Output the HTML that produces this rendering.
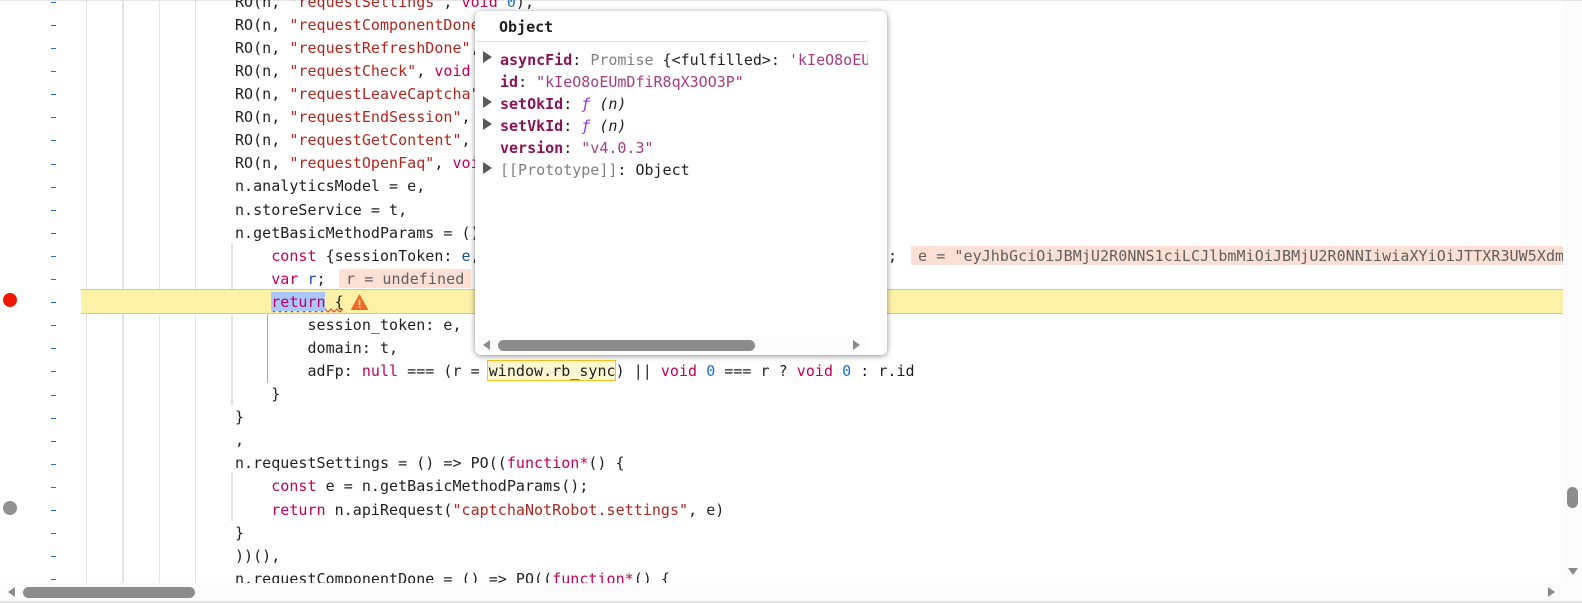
<!DOCTYPE html>
<html><head><meta charset="utf-8"><style>
html,body{margin:0;padding:0;width:1582px;height:603px;overflow:hidden;background:#fff}
body{position:relative;font-family:"DejaVu Sans Mono","Liberation Mono",monospace;font-size:15px;color:#1f1f1f}
.a{position:absolute}
.g{position:absolute;background:#e3e3e3;width:1px;top:1px;height:582px}
.d{position:absolute;left:51px;width:5px;height:1.4px;background:#1a6fd8}
#code{position:absolute;left:235px;top:-9.2px;white-space:pre;line-height:23.08px;letter-spacing:.03px}
.k{color:#c2005c}.s{color:#b3261e}.n{color:#1a6fd8}.v{color:#174ea6}
.dec{position:absolute;background:#fde0d5;color:#5f5f5f;white-space:pre;overflow:hidden;line-height:20px;letter-spacing:.07px}
#pop{position:absolute;left:475px;top:11px;width:412px;height:344px;background:#fff;border-radius:6px;box-shadow:0 1px 6px rgba(0,0,0,.45);overflow:hidden}
.r{position:absolute;left:25px;width:368px;white-space:pre;overflow:hidden;height:22px;line-height:22px}
.p{color:#881456;font-weight:bold}.st{color:#a83c82}.gr{color:#808080}.f{color:#9334e6;font-style:italic}.i{font-style:italic}
.t{position:absolute;left:8px;width:0;height:0;border-left:9px solid #5a5a5a;border-top:6px solid transparent;border-bottom:6px solid transparent}
</style></head><body>
<div class="a" style="left:0;top:0;width:1582px;height:1px;background:#e5e5e5"></div>
<div class="g" style="left:86px"></div>
<div class="g" style="left:122px;width:2px"></div>
<div class="g" style="left:159px"></div>
<div class="g" style="left:195px"></div>
<div class="g" style="left:231px;top:244px;height:162px;width:2px"></div>
<div class="g" style="left:231px;top:472px;height:49px;width:2px"></div>
<div class="a" style="left:81px;top:289px;width:1482px;height:25px;box-sizing:border-box;background:#fdf1a8;border-top:1px solid #f5c92f;border-bottom:1px solid #f5c92f"></div>
<div class="a" style="left:267px;top:314px;width:1px;height:69px;background:#8ab4f0"></div>
<svg class="a" style="left:271px;top:308px" width="72" height="5" viewBox="0 0 72 5"><path d="M0 1 l3 3 l3 -3 l3 3 l3 -3 l3 3 l3 -3 l3 3 l3 -3 l3 3 l3 -3 l3 3 l3 -3 l3 3 l3 -3 l3 3 l3 -3 l3 3 l3 -3 l3 3 l3 -3 l3 3 l3 -3 l3 3 l3 -3" fill="none" stroke="#e8352b" stroke-width="1"/></svg>
<div class="a" style="left:271px;top:292px;width:54px;height:19px;background:#a8c7fa"></div>
<div class="a" style="left:487px;top:360px;width:129px;height:21px;box-sizing:border-box;background:#fdf6d2;border:1px solid #f5c518"></div>

<div class="d" style="top:2px"></div><div class="d" style="top:25px"></div><div class="d" style="top:48px"></div><div class="d" style="top:71px"></div><div class="d" style="top:94px"></div><div class="d" style="top:117px"></div><div class="d" style="top:140px"></div><div class="d" style="top:164px"></div><div class="d" style="top:187px"></div><div class="d" style="top:210px"></div><div class="d" style="top:233px"></div><div class="d" style="top:256px"></div><div class="d" style="top:279px"></div><div class="d" style="top:302px"></div><div class="d" style="top:325px"></div><div class="d" style="top:348px"></div><div class="d" style="top:371px"></div><div class="d" style="top:395px"></div><div class="d" style="top:418px"></div><div class="d" style="top:441px"></div><div class="d" style="top:464px"></div><div class="d" style="top:487px"></div><div class="d" style="top:510px"></div><div class="d" style="top:533px"></div><div class="d" style="top:556px"></div><div class="d" style="top:579px"></div>

<div id="code">RO(n, <span class="s">"requestSettings"</span>, <span class="k">void</span> <span class="n">0</span>),
RO(n, <span class="s">"requestComponentDone"</span>, <span class="k">void</span> <span class="n">0</span>),
RO(n, <span class="s">"requestRefreshDone"</span>, <span class="k">void</span> <span class="n">0</span>),
RO(n, <span class="s">"requestCheck"</span>, <span class="k">void</span> <span class="n">0</span>),
RO(n, <span class="s">"requestLeaveCaptcha"</span>, <span class="k">void</span> <span class="n">0</span>),
RO(n, <span class="s">"requestEndSession"</span>, <span class="k">void</span> <span class="n">0</span>),
RO(n, <span class="s">"requestGetContent"</span>, <span class="k">void</span> <span class="n">0</span>),
RO(n, <span class="s">"requestOpenFaq"</span>, <span class="k">void</span> <span class="n">0</span>),
n.analyticsModel = e,
n.storeService = t,
n.getBasicMethodParams = () =&gt; {
    <span class="k">const</span> {sessionToken: <span class="v">e</span>, domain: <span class="v">t</span>} = n.storeService.getState();
    <span class="k">var</span> <span class="v">r</span>;
    <span class="k">return</span> {
        session_token: e,
        domain: t,
        adFp: <span class="k">null</span> === (r = window.rb_sync) || <span class="k">void</span> <span class="n">0</span> === r ? <span class="k">void</span> <span class="n">0</span> : r.id
    }
}
,
n.requestSettings = () =&gt; PO((<span class="k">function*</span>() {
    <span class="k">const</span> e = n.getBasicMethodParams();
    <span class="k">return</span> n.apiRequest(<span class="s">"captchaNotRobot.settings"</span>, e)
}
))(),
n.requestComponentDone = () =&gt; PO((<span class="k">function*</span>() {</div>

<div class="a" style="left:888px;top:245px;line-height:23px">;</div>
<div class="dec" style="left:339px;top:269px;width:132px;height:19px;padding-left:7px;box-sizing:border-box">r = undefined</div>
<div class="dec" style="left:911px;top:246px;width:652px;height:19px;padding-left:7px;box-sizing:border-box">e = "eyJhbGciOiJBMjU2R0NNS1ciLCJlbmMiOiJBMjU2R0NNIiwiaXYiOiJTTXR3UW5XdmJkIiwidGFnIjoi</div>

<svg class="a" style="left:351px;top:294px" width="17" height="17" viewBox="0 0 17 17"><path d="M8.5 1 L16.5 15.5 L0.5 15.5 Z" fill="#ec6a24" stroke="#ec6a24" stroke-linejoin="round" stroke-width="1"/><rect x="7.6" y="5.5" width="1.8" height="5.5" fill="#f8c9ab"/><rect x="7.6" y="12" width="1.8" height="1.8" fill="#f8c9ab"/></svg>

<div class="a" style="left:3px;top:293px;width:14px;height:14px;border-radius:50%;background:#ee1700"></div>
<div class="a" style="left:3px;top:501px;width:14px;height:14px;border-radius:50%;background:#919191"></div>

<div class="a" style="left:1563px;top:1px;width:19px;height:582px;background:#fbfbfb"></div>
<div class="a" style="left:0;top:583px;width:1582px;height:18px;background:#fbfbfb"></div>
<div class="a" style="left:0;top:601px;width:1582px;height:2px;background:#e5e5e5"></div>
<div class="a" style="left:23px;top:587px;width:172px;height:11px;border-radius:6px;background:#8c8c8c"></div>
<div class="a" style="left:1567px;top:487px;width:11px;height:21px;border-radius:6px;background:#8c8c8c"></div>
<div class="a" style="left:8px;top:587px;width:0;height:0;border-right:7px solid #8c8c8c;border-top:5px solid transparent;border-bottom:5px solid transparent"></div>
<div class="a" style="left:1548px;top:587px;width:0;height:0;border-left:7px solid #8c8c8c;border-top:5px solid transparent;border-bottom:5px solid transparent"></div>
<div class="a" style="left:1568px;top:568px;width:0;height:0;border-top:7px solid #8c8c8c;border-left:5px solid transparent;border-right:5px solid transparent"></div>

<div id="pop">
<div class="a" style="left:24px;top:5px;font-weight:bold;line-height:22px">Object</div>
<div class="a" style="left:0;top:30px;width:393px;height:1px;background:#e0e0e0"></div>
<div class="t" style="top:40px"></div>
<div class="r" style="top:38px"><span class="p">asyncFid</span>: <span class="gr">Promise</span> {&lt;fulfilled&gt;: <span class="st">'kIeO8oEUmDfiR8qX3OO3P'</span>}</div>
<div class="r" style="top:60px"><span class="p">id</span>: <span class="st">"kIeO8oEUmDfiR8qX3OO3P"</span></div>
<div class="t" style="top:85px"></div>
<div class="r" style="top:82px"><span class="p">setOkId</span>: <span class="f">ƒ</span> <span class="i">(n)</span></div>
<div class="t" style="top:107px"></div>
<div class="r" style="top:104px"><span class="p">setVkId</span>: <span class="f">ƒ</span> <span class="i">(n)</span></div>
<div class="r" style="top:126px"><span class="p">version</span>: <span class="st">"v4.0.3"</span></div>
<div class="t" style="top:151px"></div>
<div class="r" style="top:148px"><span class="gr">[[Prototype]]</span>: Object</div>
<div class="a" style="left:3px;top:325px;width:390px;height:16px;background:#fbfbfb"></div>
<div class="a" style="left:23px;top:329px;width:257px;height:11px;border-radius:6px;background:#8c8c8c"></div>
<div class="a" style="left:8px;top:329px;width:0;height:0;border-right:7px solid #8c8c8c;border-top:5px solid transparent;border-bottom:5px solid transparent"></div>
<div class="a" style="left:378px;top:329px;width:0;height:0;border-left:7px solid #8c8c8c;border-top:5px solid transparent;border-bottom:5px solid transparent"></div>
</div>
</body></html>
